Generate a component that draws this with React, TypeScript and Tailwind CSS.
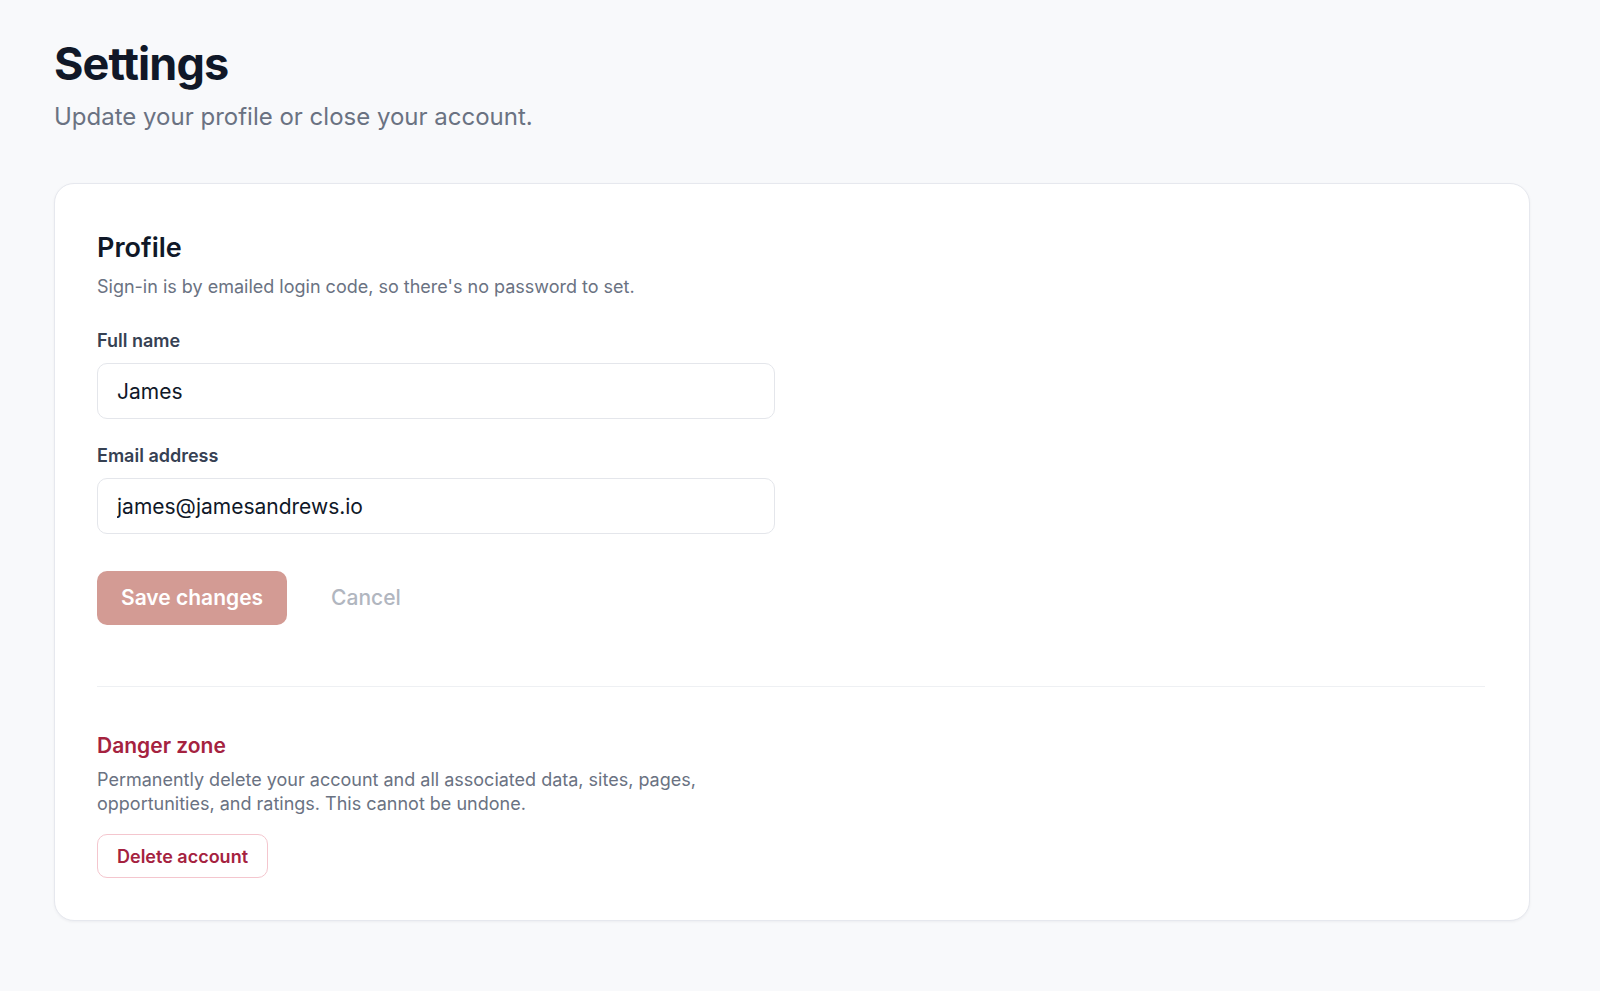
import React from "react";

export default function App() {
  return (
    <div
      className="min-h-[991px] w-full bg-[#f8f9fb] pl-[54px] pr-[70px] pt-[37px]"
      style={{ fontFamily: "Inter, 'Noto Sans', sans-serif" }}
    >
      <h1 className="text-[45px] leading-[54px] font-bold tracking-[-0.02em] text-[#101828]">
        Settings
      </h1>
      <p className="mt-[10px] text-[24px] leading-[32px] text-[#6a7282]">
        Update your profile or close your account.
      </p>

      <div className="mt-[50px] rounded-[20px] border border-[#e6e8ee] bg-white pl-[42px] pr-[44px] pt-[46px] pb-[42px] shadow-[0_1px_3px_rgba(16,24,40,0.05)]">
        <h2 className="text-[27px] leading-[36px] font-semibold text-[#101828]">Profile</h2>
        <p className="mt-[9px] text-[18px] leading-[24px] text-[#6a7282]">
          Sign-in is by emailed login code, so there's no password to set.
        </p>

        <div className="w-[678px]">
          <label className="mt-[30px] block text-[18px] leading-[24px] font-semibold text-[#364153]">
            Full name
          </label>
          <input
            readOnly
            value="James"
            className="mt-[10px] block h-[56px] w-full rounded-[10px] border border-[#e4e6eb] bg-white px-[19px] text-[21px] text-[#101828] outline-none"
          />

          <label className="mt-[25px] block text-[18px] leading-[24px] font-semibold text-[#364153]">
            Email address
          </label>
          <input
            readOnly
            value="james@jamesandrews.io"
            className="mt-[10px] block h-[56px] w-full rounded-[10px] border border-[#e4e6eb] bg-white px-[19px] text-[21px] text-[#101828] outline-none"
          />

          <div className="mt-[37px] flex items-center">
            <button className="h-[54px] rounded-[10px] bg-[#d39b94] px-[24px] text-[21px] font-semibold text-white">
              Save changes
            </button>
            <button className="ml-[44px] text-[21px] font-medium text-[#b1b6bf]">Cancel</button>
          </div>
        </div>

        <div className="mt-[61px] h-px w-full bg-[#eef0f3]" />

        <h3 className="mt-[45px] text-[21px] leading-[28px] font-semibold text-[#a5223f]">
          Danger zone
        </h3>
        <p className="mt-[8px] w-[678px] text-[18px] leading-[24px] text-[#6a7282]">
          Permanently delete your account and all associated data, sites, pages, opportunities, and
          ratings. This cannot be undone.
        </p>
        <button className="mt-[18px] h-[44px] rounded-[10px] border border-[#f4c6ce] bg-white px-[19px] text-[18px] font-semibold text-[#a5223f]">
          Delete account
        </button>
      </div>
    </div>
  );
}
